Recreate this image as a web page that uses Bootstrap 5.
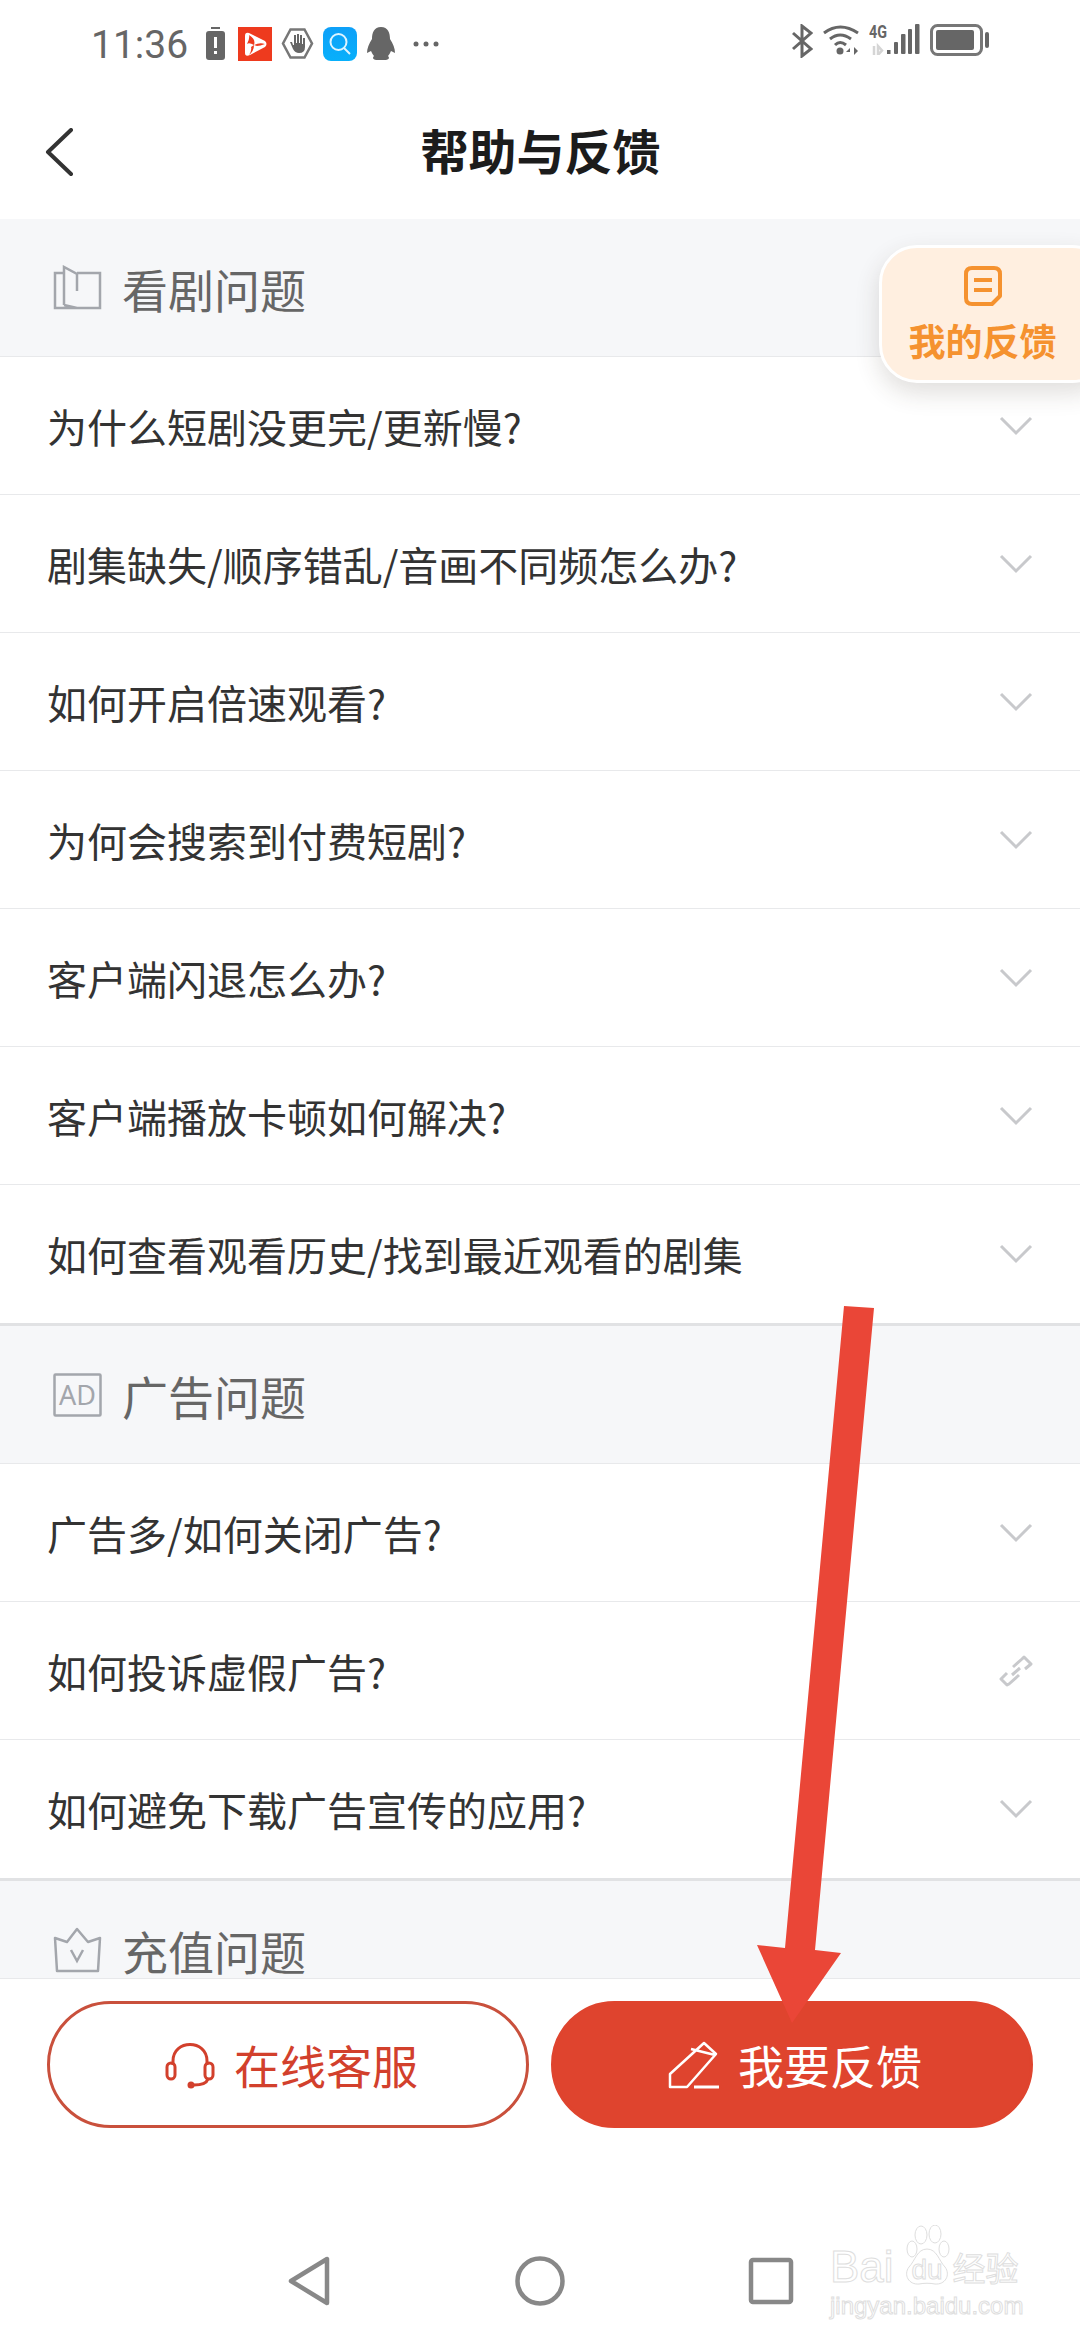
<!DOCTYPE html>
<html lang="zh-CN">
<head>
    <meta charset="UTF-8" />
    <meta name="viewport" content="width=device-width, initial-scale=1.0"/>
    <title>帮助与反馈</title>
    <link href="https://cdn.jsdelivr.net/npm/bootstrap@5.3.2/dist/css/bootstrap.min.css" rel="stylesheet"/>
    <style>
        body { font-family: "Noto Sans CJK SC", "Noto Sans", sans-serif; background: #fff; color: #333; }
        .screen { width: 1080px; height: 2340px; overflow: hidden; }
        .status-row { height: 80px; padding: 24px 90px 0 91px; color: #666; }
        .status-time { font-family: "Roboto", sans-serif; font-size: 39px; line-height: 36px; margin: 3px 9px 0 0; }
        .status-left { gap: 9px; }
        .status-right { gap: 10px; }
        .signal-icon { margin-top: -5px; }
        .title-row { height: 139px; padding-left: 45px; }
        .title-text { font-size: 48px; font-weight: 700; color: #1c1c1c; left: 1px; right: 0; top: 117px; line-height: 64px; }
        .section-head { height: 138px; background: #f6f7f9; padding-left: 53px; gap: 20px; color: #666; font-size: 46px; line-height: 50px; border-bottom: 1px solid #e8e9eb; flex-shrink: 0; }
        .section-end { height: 141px; border-top: 3px solid #e1e2e4; }
        .section-head.cut { height: 101px; padding-top: 40px; }
        .faq-item { height: 138px; padding: 0 47px; font-size: 40px; color: #333; border-color: #e8e9eb; }
        .foot-bar { height: 361px; padding-top: 22px; flex-shrink: 0; }
        .foot-btns { padding: 0 47px; gap: 22px; }
        .foot-btn { width: 482px; height: 127px; font-size: 46px; gap: 18px; padding-left: 18px; }
        .btn-line { border: 3px solid #c9503c; color: #d2402c; background: #fff; }
        .btn-solid { border: 3px solid #df442e; color: #fff; background: #df442e; }
        .nav-keys { margin-top: 128px; gap: 181px; }
        .my-feedback { right: -30px; top: 245px; width: 231px; height: 138px; background: #ffefe0; border: 3px solid #fff; border-radius: 38px; box-shadow: 0 10px 24px rgba(60, 50, 40, .16); color: #f5922f; font-size: 37px; font-weight: 700; padding: 18px 24px 0 0; line-height: 50px; }
        .my-feedback svg { margin-bottom: 9px; }
        .arrow-over { left: 0; top: 0; pointer-events: none; }
        .watermark { left: 830px; top: 2244px; width: 195px; color: #fff; -webkit-text-stroke: 1px #dedede; font-family: "Liberation Sans", sans-serif; }
        .wm-main { font-size: 44px; line-height: 46px; }
        .wm-paw { margin: -19px 3px 0 10px; }
        .wm-paw text { font-family: "Liberation Sans", sans-serif; font-size: 28px; }
        .wm-cn { font-family: "Noto Sans CJK SC", sans-serif; font-size: 33px; line-height: 46px; }
        .wm-sub { font-size: 24px; line-height: 28px; margin-top: 2px; }
    </style>
</head>
<body>
<div class="screen position-relative d-flex flex-column">

    <!-- status bar -->
    <div class="status-row d-flex justify-content-between align-items-start flex-shrink-0">
        <div class="d-flex align-items-center status-left">
            <span class="status-time">11:36</span>
            <svg width="19" height="33" viewBox="0 0 19 33"><rect x="5" y="0" width="9" height="2" fill="#666"/><rect x="0" y="4" width="19" height="29" rx="3" fill="#666"/><rect x="8" y="10" width="3" height="11" fill="#fff"/><rect x="8" y="24" width="3" height="3" fill="#fff"/></svg>
            <svg class="ms-1" width="34" height="34" viewBox="0 0 34 34"><rect width="34" height="34" fill="#ee3a1e"/><path d="M7 9Q7 5 11 6L27 14Q30 17 27 20L12 28Q7 30 7 26Z" fill="#fff"/><path d="M11 8Q18 12 16 18 Q11 15 9 17 Q12 11 11 8ZM16 18Q22 15 27 17 Q22 19 19 19ZM16 18Q16 24 11 28 Q14 23 13 20Z" fill="#ee3a1e"/></svg>
            <svg width="33" height="33" viewBox="0 0 33 33"><path d="M9.500 2.500H23.500L31 16.500 23.500 30.500H9.500L2 16.500Z" fill="none" stroke="#777" stroke-width="2.500"/><path d="M9 15L12 22Q14 26 18 26 Q24 26 24 20V11H22V17H21V8H19V16H18V7H16V16H15V8H13V18H12L11 15Z" fill="#666"/></svg>
            <svg width="34" height="34" viewBox="0 0 34 34"><defs><linearGradient id="blueTile" x1="0" y1="0" x2="0" y2="1"><stop offset="0" stop-color="#0ea0f8"/><stop offset="1" stop-color="#08b0fb"/></linearGradient></defs><rect width="34" height="34" rx="8" fill="url(#blueTile)"/><circle cx="15.500" cy="15" r="8" fill="none" stroke="#dff4ff" stroke-width="2"/><path d="M21 21L27 27" stroke="#dff4ff" stroke-width="2"/></svg>
            <svg width="30" height="33" viewBox="0 0 30 33"><path d="M15 0C8 0 6 6 6 12 3 17 1 21 1 26L5 24C6 26 7 28 8 29 6 31 7 33 12 33H18C23 33 24 31 22 29 23 28 24 26 25 24L29 26C29 21 27 17 24 12 24 6 22 0 15 0Z" fill="#666"/></svg>
            <svg class="ms-2" width="26" height="6" viewBox="0 0 26 6"><circle cx="3" cy="3" r="2.500" fill="#666"/><circle cx="13" cy="3" r="2.500" fill="#666"/><circle cx="23" cy="3" r="2.500" fill="#666"/></svg>
        </div>
        <div class="d-flex align-items-start status-right">
            <svg width="22" height="34" viewBox="0 0 22 34"><path d="M2 9L20 25 11 32V2L20 9 2 25" fill="none" stroke="#666" stroke-width="3"/></svg>
            <svg width="36" height="31" viewBox="0 0 36 31"><path d="M1 9Q17 -3 35 9M7 15Q17 7 28 15M12 21Q17 16 23 21" fill="none" stroke="#666" stroke-width="3"/><circle cx="17" cy="27" r="3.500" fill="#666"/><path d="M27 30V24L23 28H27M31 23V31L35 27Z" fill="#666"/></svg>
            <svg class="signal-icon" width="51" height="36" viewBox="0 -5 51 36"><text x="0" y="14" font-family="Roboto, sans-serif" font-size="18" font-weight="700" fill="#666" textLength="18" lengthAdjust="spacingAndGlyphs">4G</text><path d="M5 22V31M9 22V31L13 26.500Z" fill="none" stroke="#d5d5d5" stroke-width="2.500"/><rect x="18" y="26" width="3.500" height="4" fill="#666"/><rect x="25" y="18" width="4" height="12" rx="1" fill="#666"/><rect x="32" y="10" width="4.500" height="20" rx="1" fill="#666"/><rect x="39" y="5" width="4" height="25" rx="1" fill="#666"/><rect x="46" y="0" width="4.500" height="30" rx="1" fill="#666"/></svg>
            <svg width="60" height="32" viewBox="0 0 60 32"><rect x="1.500" y="1.500" width="50" height="29" rx="6" fill="none" stroke="#777" stroke-width="3"/><rect x="6" y="6" width="38" height="20" rx="2" fill="#666"/><rect x="55" y="8" width="4" height="16" rx="2" fill="#666"/></svg>
        </div>
    </div>

    <!-- title bar -->
    <div class="title-row d-flex align-items-start flex-shrink-0">
        <svg class="mt-5" width="30" height="50" viewBox="0 0 30 50"><path d="M26 2L3 24 26 46" fill="none" stroke="#333" stroke-width="4" stroke-linecap="round" stroke-linejoin="round"/></svg>
    </div>
    <div class="title-text position-absolute text-center">帮助与反馈</div>

    <!-- faq -->
    <div class="flex-grow-1">
        <div class="section-head d-flex align-items-center">
            <svg width="49" height="45" viewBox="0 0 49 45"><path d="M11 8H2V43H47V8H24M11 40V2L24 9V26M24 9V8M11 40L24 43" fill="none" stroke="#a3a6ac" stroke-width="2.500"/></svg>
            <span>看剧问题</span>
        </div>
        <div class="list-group list-group-flush rounded-0">
            <div class="list-group-item faq-item d-flex justify-content-between align-items-center"><span>为什么短剧没更完/更新慢?</span><svg width="34" height="20" viewBox="0 0 34 20"><path d="M2 2L17 17 32 2" fill="none" stroke="#c8c9cc" stroke-width="3"/></svg></div>
            <div class="list-group-item faq-item d-flex justify-content-between align-items-center"><span>剧集缺失/顺序错乱/音画不同频怎么办?</span><svg width="34" height="20" viewBox="0 0 34 20"><path d="M2 2L17 17 32 2" fill="none" stroke="#c8c9cc" stroke-width="3"/></svg></div>
            <div class="list-group-item faq-item d-flex justify-content-between align-items-center"><span>如何开启倍速观看?</span><svg width="34" height="20" viewBox="0 0 34 20"><path d="M2 2L17 17 32 2" fill="none" stroke="#c8c9cc" stroke-width="3"/></svg></div>
            <div class="list-group-item faq-item d-flex justify-content-between align-items-center"><span>为何会搜索到付费短剧?</span><svg width="34" height="20" viewBox="0 0 34 20"><path d="M2 2L17 17 32 2" fill="none" stroke="#c8c9cc" stroke-width="3"/></svg></div>
            <div class="list-group-item faq-item d-flex justify-content-between align-items-center"><span>客户端闪退怎么办?</span><svg width="34" height="20" viewBox="0 0 34 20"><path d="M2 2L17 17 32 2" fill="none" stroke="#c8c9cc" stroke-width="3"/></svg></div>
            <div class="list-group-item faq-item d-flex justify-content-between align-items-center"><span>客户端播放卡顿如何解决?</span><svg width="34" height="20" viewBox="0 0 34 20"><path d="M2 2L17 17 32 2" fill="none" stroke="#c8c9cc" stroke-width="3"/></svg></div>
            <div class="list-group-item faq-item d-flex justify-content-between align-items-center"><span>如何查看观看历史/找到最近观看的剧集</span><svg width="34" height="20" viewBox="0 0 34 20"><path d="M2 2L17 17 32 2" fill="none" stroke="#c8c9cc" stroke-width="3"/></svg></div>
        </div>

        <div class="section-end section-head d-flex align-items-center">
            <svg width="49" height="44" viewBox="0 0 49 44"><rect x="1.500" y="1.500" width="46" height="41" rx="1" fill="none" stroke="#a3a6ac" stroke-width="2.500"/><text x="24.500" y="32" text-anchor="middle" font-family="Noto Sans, sans-serif" font-size="27" fill="#a3a6ac">AD</text></svg>
            <span>广告问题</span>
        </div>
        <div class="list-group list-group-flush rounded-0">
            <div class="list-group-item faq-item d-flex justify-content-between align-items-center"><span>广告多/如何关闭广告?</span><svg width="34" height="20" viewBox="0 0 34 20"><path d="M2 2L17 17 32 2" fill="none" stroke="#c8c9cc" stroke-width="3"/></svg></div>
            <div class="list-group-item faq-item d-flex justify-content-between align-items-center"><span>如何投诉虚假广告?</span><svg width="34" height="34" viewBox="0 0 34 34"><path d="M14 13L23 5 25 3 32 10 26 15M20 21L10 30 8 31 2 25 8 19M13 21L21 14" fill="none" stroke="#c8c9cc" stroke-width="3" stroke-linejoin="round"/></svg></div>
            <div class="list-group-item faq-item d-flex justify-content-between align-items-center"><span>如何避免下载广告宣传的应用?</span><svg width="34" height="20" viewBox="0 0 34 20"><path d="M2 2L17 17 32 2" fill="none" stroke="#c8c9cc" stroke-width="3"/></svg></div>
        </div>

        <div class="section-end section-head cut d-flex align-items-center">
            <svg width="49" height="46" viewBox="0 0 49 46"><path d="M2 11L14 15 24 2 35 15 47 11 45 44H4Z" fill="none" stroke="#a3a6ac" stroke-width="2.500" stroke-linejoin="round"/><path d="M18 23L24 34 30 23" fill="none" stroke="#a3a6ac" stroke-width="2.500"/></svg>
            <span>充值问题</span>
        </div>
    </div>

    <!-- bottom buttons and system keys -->
    <div class="foot-bar">
        <div class="foot-btns d-flex">
            <button class="btn rounded-pill foot-btn btn-line d-flex align-items-center justify-content-center">
                <svg width="52" height="48" viewBox="0 0 52 48"><path d="M9 24V20C9 -2 43 -2 43 20V24" fill="none" stroke="#d2402c" stroke-width="3"/><rect x="3" y="22" width="8" height="16" rx="4" fill="none" stroke="#d2402c" stroke-width="3"/><rect x="41" y="22" width="8" height="16" rx="4" fill="none" stroke="#d2402c" stroke-width="3"/><path d="M44 38Q42 44 30 44" fill="none" stroke="#d2402c" stroke-width="3"/><circle cx="27" cy="44" r="3.500" fill="#d2402c"/></svg>
                <span>在线客服</span>
            </button>
            <button class="btn rounded-pill foot-btn btn-solid d-flex align-items-center justify-content-center">
                <svg width="52" height="48" viewBox="0 0 52 48"><path d="M2 46V33L36 2 48 13 19 46ZM23 8L47 14" fill="none" stroke="#fff" stroke-width="2.500" stroke-linejoin="round"/><path d="M26 46H51" stroke="#fff" stroke-width="3"/></svg>
                <span>我要反馈</span>
            </button>
        </div>
        <div class="nav-keys d-flex justify-content-center">
            <svg width="50" height="50" viewBox="0 0 50 50"><path d="M43 3V47L7 25Z" fill="none" stroke="#888" stroke-width="4.500" stroke-linejoin="round"/></svg>
            <svg width="50" height="50" viewBox="0 0 50 50"><circle cx="25" cy="25" r="22.500" fill="none" stroke="#888" stroke-width="4.500"/></svg>
            <svg width="50" height="50" viewBox="0 0 50 50"><rect x="5" y="4" width="40" height="42" rx="2" fill="none" stroke="#888" stroke-width="4.500"/></svg>
        </div>
    </div>

    <!-- floating tab -->
    <div class="my-feedback position-absolute text-center">
        <svg class="d-block mx-auto" width="38" height="40" viewBox="0 0 38 40"><path d="M8 2H30Q36 2 36 8V30L28 38H8Q2 38 2 32V8Q2 2 8 2Z" fill="none" stroke="#f5922f" stroke-width="4" stroke-linejoin="round"/><path d="M10 14H28M10 24H28" stroke="#f5922f" stroke-width="4"/></svg>
        我的反馈
    </div>

    <!-- red arrow drawn over the screenshot -->
    <svg class="arrow-over position-absolute" width="1080" height="2340" viewBox="0 0 1080 2340"><polygon points="844,1306 874,1308 815,1950 841,1953 792,2023 757,1945 785,1948" fill="#ea4637"/></svg>

    <!-- watermark -->
    <div class="watermark position-absolute">
        <div class="d-flex align-items-start text-nowrap">
            <span class="wm-main">Bai</span>
            <svg class="wm-paw flex-shrink-0" width="46" height="65" viewBox="0 0 46 65"><g fill="#fff" stroke="#dedede"><ellipse cx="8" cy="24" rx="5" ry="8"/><ellipse cx="17" cy="10" rx="6" ry="9"/><ellipse cx="31" cy="9" rx="6" ry="9"/><ellipse cx="40" cy="24" rx="5" ry="8"/><path d="M23 24C33 24 35 36 41 42 47 50 41 60 31 59 26 58 20 58 15 59 5 60 -1 50 5 42 11 36 13 24 23 24Z"/></g><text x="23" y="54" text-anchor="middle" fill="#fff" stroke="#dedede" stroke-width="1">du</text></svg>
            <span class="wm-cn">经验</span>
        </div>
        <div class="wm-sub text-nowrap">jingyan.baidu.com</div>
    </div>
</div>
<script src="https://cdn.jsdelivr.net/npm/bootstrap@5.3.2/dist/js/bootstrap.bundle.min.js"></script>
</body>
</html>
